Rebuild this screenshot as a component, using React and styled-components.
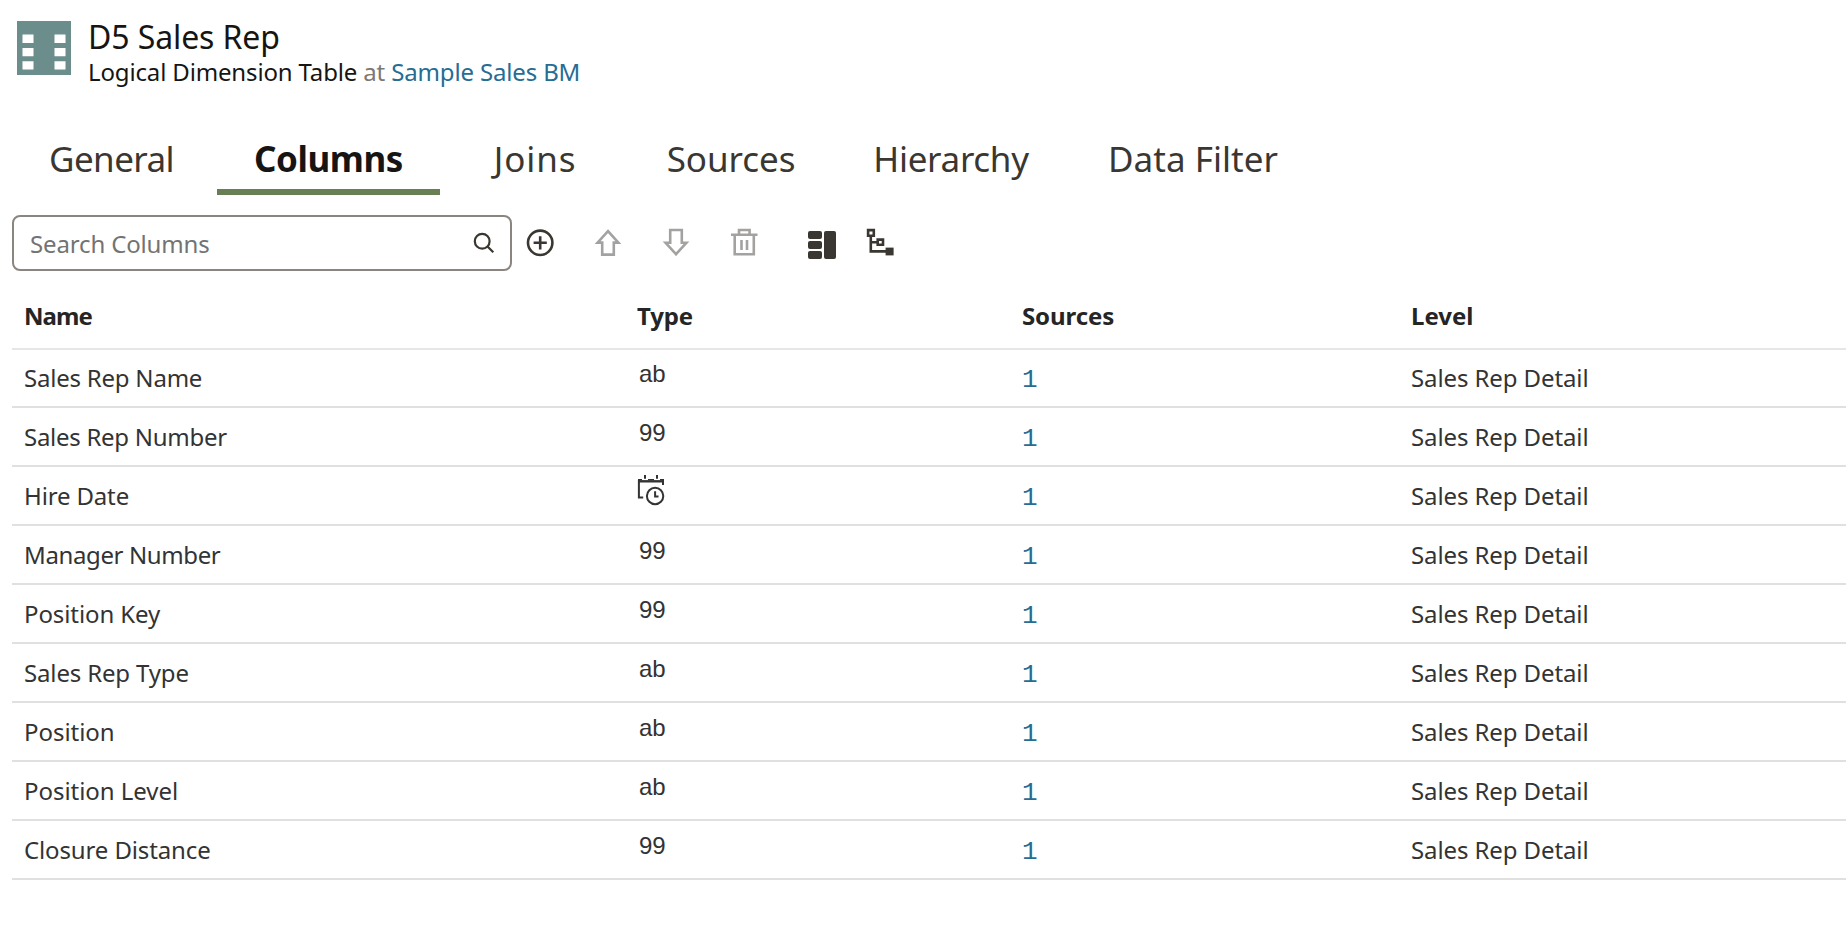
import React from "react";
import styled, { createGlobalStyle } from "styled-components";

const Global = createGlobalStyle`
  * { box-sizing: border-box; }
  body { margin: 0; background: #fff; overflow: hidden; }
`;

const Page = styled.main`
  width: 100%;
  height: 936px;
  background: #fff;
  color: #161513;
  font-family: "Noto Sans", sans-serif;
  font-size: 24px;
  overflow: hidden;
`;

const Header = styled.header`
  display: flex;
  gap: 17px;
  height: 128px;
  padding: 18px 0 0 17px;
`;

const Logo = styled.svg`
  flex: none;
  width: 54px;
  height: 54px;
  margin-top: 3px;
`;

const Title = styled.h1`
  margin: 0;
  font-size: 32px;
  font-weight: 400;
  letter-spacing: -0.1px;
  line-height: 37px;
`;

const Subtitle = styled.p`
  margin: 0;
  letter-spacing: -0.15px;
  line-height: 33px;
  white-space: nowrap;
`;

const Muted = styled.span`
  color: #7d7873;
`;

const Link = styled.a`
  color: #266c93;
  text-decoration: none;
`;

const Tabs = styled.nav`
  display: flex;
  gap: 6px;
  padding-left: 12px;
`;

const Tab = styled.button`
  flex: none;
  width: ${(p) => p.$width}px;
  height: 67px;
  padding: 0;
  border: 0;
  border-bottom: 6px solid ${(p) => (p.$active ? "#687f56" : "transparent")};
  background: none;
  color: ${(p) => (p.$active ? "#161513" : "#3a3631")};
  font-family: inherit;
  font-size: 35px;
  font-weight: ${(p) => (p.$active ? 700 : 400)};
  letter-spacing: ${(p) => p.$spacing}px;
  line-height: 61px;
  text-align: center;
  white-space: nowrap;
`;

const Toolbar = styled.div`
  display: flex;
  align-items: center;
  margin-top: 20px;
  padding-left: 12px;
`;

const SearchBox = styled.div`
  display: flex;
  align-items: center;
  justify-content: space-between;
  width: 500px;
  height: 56px;
  padding: 0 15px 0 16px;
  border: 2px solid #8b8580;
  border-radius: 8px;
  color: #737373;
  letter-spacing: -0.15px;
`;

const Icon = styled.svg`
  flex: none;
  width: 32px;
  height: 32px;
  margin-left: ${(p) => p.$gap || 0}px;
  color: ${(p) => (p.$disabled ? "#a3a2a0" : "#3a3631")};
  fill: none;
  stroke: currentColor;
  stroke-width: 2.6;
`;

const SearchIcon = styled(Icon)`
  width: 22px;
  height: 24px;
  stroke-width: 2.2;
`;

const Table = styled.div`
  margin: 12px 0 0 12px;
`;

const Row = styled.div`
  display: grid;
  grid-template-columns: 613px 385px 389px 1fr;
  align-items: center;
  height: ${(p) => p.$height}px;
  padding-left: 12px;
  border-bottom: 2px solid #e0e0e0;
  color: #333;
`;

const HeadRow = styled(Row)`
  border-color: #e6e6e6;
  color: #252525;
  font-weight: 700;
`;

const Cell = styled.div`
  letter-spacing: ${(p) => p.$spacing || 0}px;
  line-height: 32px;
  white-space: nowrap;
`;

const TypeCell = styled.div`
  display: flex;
  align-items: center;
  padding: 0 0 8px 2px;
  font-family: "Liberation Sans", sans-serif;
`;

const CalendarIcon = styled.svg`
  width: 28px;
  height: 32px;
  margin: 0 0 2px -2px;
`;

const Count = styled(Link)`
  font-family: "Liberation Mono", monospace;
  font-size: 26px;
  line-height: 24px;
`;

const tabs = [
  { label: "General", width: 199, spacing: -0.6 },
  { label: "Columns", width: 223, spacing: -0.45, active: true },
  { label: "Joins", width: 178, spacing: 0.9 },
  { label: "Sources", width: 202, spacing: -0.05 },
  { label: "Hierarchy", width: 226, spacing: -0.3 },
  { label: "Data Filter", width: 246, spacing: 0.05 },
];

const columns = [
  { label: "Name", spacing: -0.9 },
  { label: "Type", spacing: -0.2 },
  { label: "Sources", spacing: -0.1 },
  { label: "Level", spacing: 0 },
];

const rows = [
  { name: "Sales Rep Name", type: "ab", spacing: -0.22 },
  { name: "Sales Rep Number", type: "99", spacing: -0.28 },
  { name: "Hire Date", type: "date", spacing: -0.15 },
  { name: "Manager Number", type: "99", spacing: -0.38 },
  { name: "Position Key", type: "99", spacing: -0.1 },
  { name: "Sales Rep Type", type: "ab", spacing: -0.15 },
  { name: "Position", type: "ab", spacing: -0.05 },
  { name: "Position Level", type: "ab", spacing: -0.05 },
  { name: "Closure Distance", type: "99", spacing: -0.13 },
];

const Calendar = () => (
  <CalendarIcon viewBox="0 0 28 32" fill="none" stroke="#333">
    <path d="M6.2 22.6H1.9V5" strokeWidth="2" />
    <path d="M1 6.3H27" strokeWidth="2.4" />
    <path d="M1 4.6H5M11 4.6H17M23 4.6H27" strokeWidth="1.4" />
    <path d="M8 0V3.8M20 0V3.8M26 4V10" strokeWidth="2" />
    <circle cx="18.1" cy="21" r="8.2" strokeWidth="2" />
    <path d="M18.1 16.2V21.6H21.5" strokeWidth="2" />
  </CalendarIcon>
);

export default function App() {
  return (
    <>
      <Global />
      <Page>
        <Header>
          <Logo viewBox="0 0 54 54">
            <path fill="#6b8e8d" d="M0 0h54v54H0z" />
            <path
              fill="#fff"
              d="M5.5 13.5h11v8.5h-11zM37.5 13.5h11v8.5h-11zM5.5 27h11v8.3h-11zM37.5 27h11v8.3h-11zM5.5 40.2h11v8.3h-11zM37.5 40.2h11v8.3h-11z"
            />
          </Logo>
          <div>
            <Title>D5 Sales Rep</Title>
            <Subtitle>
              Logical Dimension Table <Muted>at</Muted> <Link>Sample Sales BM</Link>
            </Subtitle>
          </div>
        </Header>

        <Tabs>
          {tabs.map((t) => (
            <Tab key={t.label} $width={t.width} $active={t.active} $spacing={t.spacing}>
              {t.label}
            </Tab>
          ))}
        </Tabs>

        <Toolbar>
          <SearchBox>
            <span>Search Columns</span>
            <SearchIcon viewBox="0 0 22 24">
              <circle cx="9.2" cy="10.2" r="7.4" />
              <path d="M14.5 15.5L20.3 21.3" />
            </SearchIcon>
          </SearchBox>
          <Icon viewBox="0 0 32 32" $gap={12}>
            <circle cx="16.2" cy="15.8" r="12.2" />
            <path d="M16.2 9.2V22.4M9.6 15.8H22.8" />
          </Icon>
          <Icon viewBox="0 0 32 32" $gap={36} $disabled>
            <path d="M16 4.2L26.4 15.6H21.8V27.6H10.2V15.6H5.6Z" />
          </Icon>
          <Icon viewBox="0 0 32 32" $gap={36} $disabled>
            <path d="M16 27.2L5.6 15.8H10.2V3H21.8V15.8H26.4Z" />
          </Icon>
          <Icon viewBox="0 0 32 32" $gap={36} $disabled>
            <path d="M3 7.8H29.5M6.7 8V27.3H25.8V8M11 7.5V3H21.6V7.5M13.5 13V23M19 13V23" />
          </Icon>
          <Icon viewBox="0 0 32 32" $gap={46}>
            <g fill="currentColor" stroke="none">
              <rect x="2" y="4" width="14" height="8" rx="2" />
              <rect x="2" y="14" width="14" height="8" rx="2" />
              <rect x="2" y="24" width="14" height="8" rx="2" />
              <rect x="18" y="4" width="12" height="28" rx="2" />
            </g>
          </Icon>
          <Icon viewBox="0 0 32 32" $gap={26}>
            <path d="M4.1 3.1H9.8V8.8H4.1ZM13.7 12.6H19V17.8H13.7ZM6.8 9V24.4H22M6.8 15.2H13" />
            <path fill="currentColor" stroke="none" d="M21.6 20.6H29.6V28.4H21.6Z" />
          </Icon>
        </Toolbar>

        <Table>
          <HeadRow $height={67}>
            {columns.map((c) => (
              <Cell key={c.label} $spacing={c.spacing}>
                {c.label}
              </Cell>
            ))}
          </HeadRow>
          {rows.map(({ name, type, spacing }, i) => (
            <Row key={name} $height={i ? 59 : 58}>
              <Cell $spacing={spacing}>{name}</Cell>
              <TypeCell>{type === "date" ? <Calendar /> : type}</TypeCell>
              <Cell>
                <Count>1</Count>
              </Cell>
              <Cell $spacing={-0.1}>Sales Rep Detail</Cell>
            </Row>
          ))}
        </Table>
      </Page>
    </>
  );
}
